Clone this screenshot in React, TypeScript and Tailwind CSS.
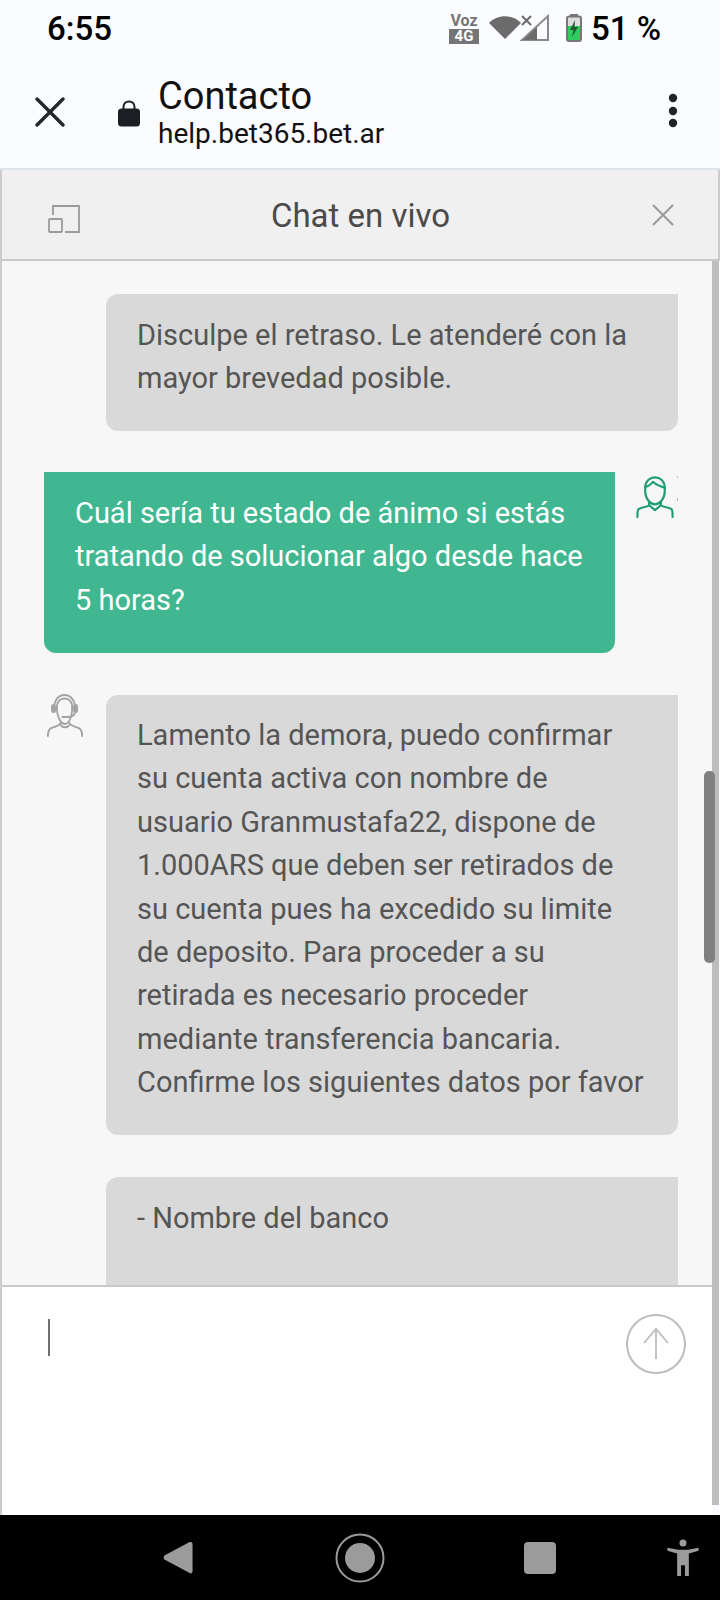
import React from "react";

const Agent = () => (
  <svg width="36" height="46" viewBox="0 0 40 46" preserveAspectRatio="none" fill="none" stroke="#a3a3a3" strokeWidth="2" strokeLinecap="round" strokeLinejoin="round">
    <path d="M8 19 C6 -1 33 -1 31 19" />
    <path d="M11 18 C9 4 30 4 28 18" />
    <path d="M11 16 C11 27 16 33 20 33 C24 33 28 27 28 16" />
    <rect x="5.5" y="14" width="3.5" height="7" rx="1.5" fill="#a3a3a3" />
    <rect x="30" y="14" width="3.5" height="7" rx="1.5" fill="#a3a3a3" />
    <path d="M31 21 C31 25 27 26 22 26 L17 26" />
    <path d="M15 32 C14 35 10 35 5 37 C2 38 1 40 1 45" />
    <path d="M25 32 C26 35 30 35 35 37 C38 38 39 40 39 45" />
    <path d="M15 34 C17 37 23 37 25 34" />
  </svg>
);

const User = () => (
  <svg width="38" height="43" viewBox="0 0 38 44" fill="none" stroke="#1f9d72" strokeWidth="2.2" strokeLinecap="round" strokeLinejoin="round">
    <path d="M9 13 C9 -1 29 -1 29 13 L29 17 C29 24 24 30 19 30 C14 30 9 24 9 17 Z" />
    <path d="M9 12 C13 12 16 8 17 7 C20 10 25 12 29 13" />
    <path d="M13 28 L13 31 C10 33 5 33 2 35 C1 36 1 38 1 43" />
    <path d="M25 28 L25 31 C28 33 33 33 36 35 C37 36 37 38 37 43" />
    <path d="M13 31 L19 36 L25 31" />
  </svg>
);

const Bubble = ({ className, children }: { className: string; children: React.ReactNode }) => (
  <div className={`pl-[31px] pr-[31px] pb-[21px] text-[29px] leading-[43.4px] ${className}`}>{children}</div>
);

export default function App() {
  return (
    <div className="w-[720px] h-[1600px] flex flex-col bg-[#fbfcff] overflow-hidden font-['Roboto',sans-serif]">
      {/* status bar */}
      <div className="h-[56px] shrink-0 flex items-center pl-[47px] pr-[59px] text-black">
        <span className="text-[33px] leading-none font-medium">6:55</span>
        <div className="ml-auto flex items-center">
          <div className="w-[30px] flex flex-col items-center leading-none">
            <span className="text-[16px] leading-[17px] font-bold text-[#757575]">Voz</span>
            <span className="w-[30px] h-[15px] bg-[#757575] text-white text-[15px] leading-[15px] font-bold text-center">4G</span>
          </div>
          <svg width="62" height="30" viewBox="0 0 62 30" className="ml-[10px]">
            <path d="M0 10 C8 1 24 1 32 10 L16 26 Z" fill="#6b6b6b" />
            <path d="M33 3 L42 12 M42 3 L33 12" stroke="#6b6b6b" strokeWidth="2" />
            <path d="M59 3 L59 27 L33 27 Z" fill="none" stroke="#8a8a8a" strokeWidth="2" />
            <path d="M48 14 L48 27 L34 27 Z" fill="#6b6b6b" />
          </svg>
          <svg width="16" height="28" viewBox="0 0 16 28" className="ml-[15px]">
            <rect x="4" y="0" width="8" height="3" fill="#777" />
            <rect x="1" y="2.5" width="14" height="24.5" rx="2" fill="#ddd" stroke="#777" strokeWidth="2" />
            <rect x="2" y="12" width="12" height="14" fill="#2ecc5f" />
            <path d="M9 6 L4 16 L7.5 16 L6 23 L12 13 L8.5 13 Z" fill="#1d5c33" />
          </svg>
          <span className="ml-[9px] text-[33px] leading-none font-medium">51 %</span>
        </div>
      </div>
      {/* browser bar */}
      <div className="h-[114px] shrink-0 flex items-center border-b-2 border-[#dde3e8]">
        <svg width="30" height="30" viewBox="0 0 30 30" className="ml-[35px]" stroke="#23272b" strokeWidth="3.4" strokeLinecap="round">
          <path d="M2 2 L28 28 M28 2 L2 28" />
        </svg>
        <svg width="22" height="28" viewBox="0 0 22 28" className="ml-[53px] mt-[2px]">
          <path d="M5.5 11 L5.5 8 C5.5 0.5 16.5 0.5 16.5 8 L16.5 11" fill="none" stroke="#1b1f23" strokeWidth="2" />
          <rect x="0" y="9.5" width="22" height="18" rx="3.5" fill="#1b1f23" />
        </svg>
        <div className="ml-[18px] flex flex-col">
          <span className="text-[38px] leading-[44px] text-[#111]">Contacto</span>
          <span className="text-[28px] leading-[32px] text-[#111]">help.bet365.bet.ar</span>
        </div>
        <svg width="12" height="36" viewBox="0 0 12 36" className="ml-auto mr-[41px] mt-[-2px]" fill="#202327">
          <circle cx="6" cy="5" r="4.2" />
          <circle cx="6" cy="18" r="4.2" />
          <circle cx="6" cy="30" r="4.2" />
        </svg>
      </div>
      {/* panel */}
      <div className="flex-1 min-h-0 flex flex-col border-l-2 border-[#cccccc] relative">
        <div className="h-[91px] shrink-0 flex items-center bg-[#f0f0f0] border-b-2 border-[#c8c8c8] border-r-2 border-r-[#cccccc]">
          <svg width="32" height="28" viewBox="0 0 32 28" className="ml-[46px] mt-[9px]" fill="none" stroke="#9a9a9a" strokeWidth="1.8">
            <path d="M5 10 L5 1 L31 1 L31 27 L17 27" />
            <rect x="1" y="14" width="13" height="13" rx="1" />
          </svg>
          <div className="flex-1 text-center text-[33px] leading-none text-[#4a4a4a] pr-[11px] pt-[2px]">Chat en vivo</div>
          <svg width="22" height="22" viewBox="0 0 22 22" className="mr-[44px]" stroke="#9a9a9a" strokeWidth="2">
            <path d="M1 1 L21 21 M21 1 L1 21" />
          </svg>
        </div>
        <div className="flex-1 min-h-0 flex">
          <div className="flex-1 min-w-0 flex flex-col">
            <div className="h-[1024px] shrink-0 overflow-hidden bg-[#f7f7f7] pt-[33px] pl-[42px] pr-[31px] text-[#555555] flex flex-col">
              <Bubble className="pt-[20px] ml-[62px] w-[572px] h-[137px] bg-[#d9d9d9] rounded-bl-[12px] rounded-br-[12px] rounded-tl-[12px] shrink-0">
                Disculpe el retraso. Le atenderé con la mayor brevedad posible.
              </Bubble>
              <div className="mt-[41px] flex shrink-0">
                <Bubble className="pt-[20px] w-[571px] h-[181px] bg-[#41b791] text-white rounded-bl-[12px] rounded-br-[12px]">
                  Cuál sería tu estado de ánimo si estás tratando de solucionar algo desde hace 5 horas?
                </Bubble>
                <div className="ml-[21px] mt-[3px] relative">
                  <User />
                  <div className="absolute left-[41px] top-[1px] w-[1px] h-[2px] bg-[#bbbbbb]" />
                  <div className="absolute left-[41px] top-[23px] w-[1px] h-[3px] bg-[#bbbbbb]" />
                </div>
              </div>
              <div className="mt-[42px] flex shrink-0">
                <div className="w-[62px] mt-[-4px] pl-[3px]"><Agent /></div>
                <Bubble className="pt-[19px] w-[572px] h-[440px] bg-[#d9d9d9] rounded-bl-[12px] rounded-br-[12px] rounded-tl-[12px]">
                  Lamento la demora, puedo confirmar su cuenta activa con nombre de usuario Granmustafa22, dispone de 1.000ARS que deben ser retirados de su cuenta pues ha excedido su limite de deposito. Para proceder a su retirada es necesario proceder mediante transferencia bancaria. Confirme los siguientes datos por favor
                </Bubble>
              </div>
              <Bubble className="pt-[20px] mt-[42px] ml-[62px] w-[572px] h-[200px] shrink-0 bg-[#d9d9d9] rounded-tl-[12px]">
                - Nombre del banco
              </Bubble>
            </div>
            <div className="flex-1 min-h-0 bg-white border-t-2 border-[#c8c8c8] flex items-start relative">
              <div className="ml-[46px] mt-[32px] w-[1.5px] h-[37px] bg-[#707070]" />
              <svg width="60" height="60" viewBox="0 0 60 60" className="ml-auto mr-[26px] mt-[27px]" fill="none" stroke="#bdbdbd">
                <circle cx="30" cy="30" r="29" strokeWidth="2" />
                <path d="M30 45 L30 15 M18 29 L30 15 L42 29" strokeWidth="1.8" />
              </svg>
            </div>
          </div>
          <div className="w-[7px] h-[1244px] shrink-0 bg-[#bdbdbd]" />
          <div className="w-[1px] bg-white" />
        </div>
        <div className="absolute left-[702px] top-[601px] w-[11px] h-[192px] rounded-[5px] bg-[#808080]" />
      </div>
      {/* nav */}
      <div className="h-[85px] shrink-0 bg-black flex items-center relative">
        <svg width="30" height="33" viewBox="0 0 30 34" className="ml-[163px]"><path d="M28 1 C29 1 30 2 30 3 L30 31 C30 33 28 34 27 33 L1 19 C0 18 0 16 1 15 L27 1 Z" fill="#9b9b9b" /></svg>
        <svg width="50" height="50" viewBox="0 0 50 50" className="ml-[142px]" fill="none">
          <circle cx="25" cy="25" r="23.5" stroke="#9b9b9b" strokeWidth="2" />
          <circle cx="25" cy="25" r="15" fill="#9b9b9b" />
        </svg>
        <svg width="32" height="32" viewBox="0 0 32 32" className="ml-[139px]"><rect width="32" height="32" rx="4" fill="#9b9b9b" /></svg>
        <svg width="32" height="37" viewBox="0 0 32 38" className="ml-[111px]" fill="#9b9b9b">
          <circle cx="16" cy="4" r="3.6" />
          <path d="M0 9 L11 11 L21 11 L32 9 L32 12 L22 15 L22 38 L18 38 L18 27 L14 27 L14 38 L10 38 L10 15 L0 12 Z" />
        </svg>
      </div>
    </div>
  );
}
